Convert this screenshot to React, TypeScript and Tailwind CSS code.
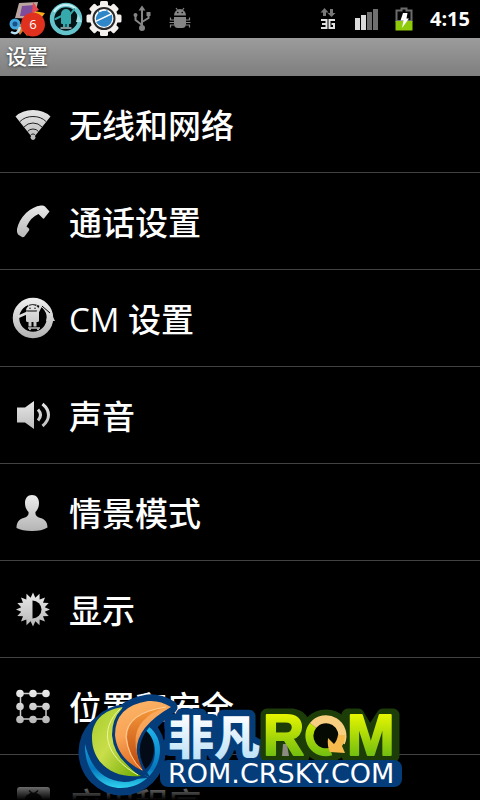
import type { ReactNode } from 'react';

const FONT = "font-['Open_Sans','Noto_Sans_CJK_SC',sans-serif]";

// Shared grey gradient for the preference icons
function IconDefs() {
  return (
    <svg width="0" height="0" className="absolute" aria-hidden>
      <defs>
        <linearGradient id="silver" gradientUnits="userSpaceOnUse" x1="0" y1="4" x2="0" y2="40">
          <stop offset="0" stopColor="#ececec" />
          <stop offset="1" stopColor="#b4b4b4" />
        </linearGradient>
      </defs>
    </svg>
  );
}

function RowIcon({ children }: { children: ReactNode }) {
  return (
    <svg viewBox="0 0 42 42" className="h-[42px] w-[42px] shrink-0 overflow-visible" fill="url(#silver)" aria-hidden>
      {children}
    </svg>
  );
}

function StatusIcon({ children }: { children: ReactNode }) {
  return (
    <svg viewBox="0 0 38 38" className="h-[38px] w-[38px] shrink-0" aria-hidden>
      {children}
    </svg>
  );
}

const WifiIcon = () => (
  <RowIcon>
    <path d="M3.500 13.500Q10 7 21 7t17.500 6.500L23 33a2.500 2.500 0 1 1-4 0Z" />
    <g fill="none" stroke="#222" strokeWidth="1">
      <path d="M8 18.500Q13 13.500 21 13.500t13 5" />
      <path d="M12 24Q15.500 20 21 20t9 4" />
      <path d="M15.500 28.500Q17.500 26 21 26t5.500 2.500" />
      <path d="M18.500 32.500a2.800 2.800 0 0 1 5 0" />
    </g>
  </RowIcon>
);

const PhoneIcon = () => (
  <RowIcon>
    <path d="M29 5.500Q31.500 5 33 6.500L37.500 11.500 32 18.500Q31 19 30 17.500L26.500 14Q19 17 14.500 26.500L17 28.500Q17.500 29.500 17 30.500L12.500 36.500Q11.500 37.500 10 37L6 34.500Q4.500 32.500 5 29 7 20 14 13 21 6.500 29 5.500Z" />
  </RowIcon>
);

const CmIcon = () => (
  <RowIcon>
    <circle cx="21" cy="21" r="17" fill="none" stroke="url(#silver)" strokeWidth="6.500" />
    <path d="M37 12l6 12h-9Z" />
    <path d="M30 9l8 7" stroke="#000" strokeWidth="1" />
    <path d="M14 13.500a6.500 5.500 0 0 1 13 0Z" />
    <path d="M15.500 7l2 2.500M26 7l-2 2.500" stroke="#ddd" strokeWidth="1" />
    <circle cx="18" cy="11.300" r=".7" fill="#000" />
    <circle cx="23" cy="11.300" r=".7" fill="#000" />
    <path d="M14 14.500h13v9q0 1.500-1.500 1.500h-1v4.500h-3V25h-2v4.500h-3V25h-1q-1.500 0-1.500-1.500Z" />
    <path d="M15 16l-8 3.500M26 14.500l3-6" stroke="#ddd" strokeWidth="2.500" strokeLinecap="round" />
    <path d="M16 31h12" stroke="#ddd" strokeWidth="1.300" />
    <circle cx="18" cy="32.300" r="1" />
    <circle cx="26" cy="32.300" r="1" />
  </RowIcon>
);

const SoundIcon = () => (
  <RowIcon>
    <path d="M5 13.500h8L22 7v28L13 28.500H5Z" />
    <g fill="none" stroke="url(#silver)" strokeWidth="3">
      <path d="M26 15.500q5 5.500 0 11" />
      <path d="M30.500 10Q36.500 15 36.500 21T30.500 32" />
    </g>
  </RowIcon>
);

const ProfileIcon = () => (
  <RowIcon>
    <path d="M20 4c4.500 0 7 3.500 7 8 0 4-1.500 7-3.500 9-.5 3 1 5 5 6 4.500 1 7 4.500 7 9.500Q30 40 20 40T4.500 37c0-5.500 2.500-9 7-10 4-1 5.500-3 5-6-2-2-3.500-5-3.500-9 0-4.500 2.500-8 7-8Z" />
  </RowIcon>
);

const RAYS = Array.from({ length: 32 }, (_, i) => {
  const r = i % 2 === 0 ? 17 : 12;
  const a = (i * Math.PI) / 16 - Math.PI / 2;
  return `${21 + r * Math.cos(a)},${21.500 + r * Math.sin(a)}`;
}).join(' ');

const DisplayIcon = () => (
  <RowIcon>
    <polygon points={RAYS} />
    <path d="M20.500 12.500a9 9 0 0 1 0 18Z" fill="#000" />
  </RowIcon>
);

const PatternIcon = () => (
  <RowIcon>
    <path d="M34 8.500H8.500V34H34V21.500H21" fill="none" stroke="#c8c8c8" strokeWidth="1.500" />
    {[[8, 8], [21, 8], [34, 8], [8, 21], [21, 21], [34, 21], [8, 34], [21, 34], [34, 34]].map(([x, y]) => (
      <circle key={`${x}-${y}`} cx={x} cy={y + 0.5} r="3.800" />
    ))}
  </RowIcon>
);

const AppsIcon = () => (
  <RowIcon>
    <rect x="5" y="5" width="33" height="33" rx="3" />
    <path d="M12 20a9.500 9.500 0 0 1 19 0Z" fill="#222" />
    <path d="M17 8.500l4.500 4 4.500-4" fill="none" stroke="#222" strokeWidth="1.500" />
  </RowIcon>
);

const ITEMS = [
  { label: '无线和网络', Icon: WifiIcon },
  { label: '通话设置', Icon: PhoneIcon },
  { label: 'CM 设置', Icon: CmIcon },
  { label: '声音', Icon: SoundIcon },
  { label: '情景模式', Icon: ProfileIcon },
  { label: '显示', Icon: DisplayIcon },
  { label: '位置和安全', Icon: PatternIcon },
  { label: '应用程序', Icon: AppsIcon },
];

function GearIcon() {
  return (
    <StatusIcon>
      {[0, 45, 90, 135].map(a => (
        <rect key={a} x="15" y="1" width="8" height="35" rx="1.500" fill="#f4f0ee" transform={`rotate(${a} 19 18.500)`} />
      ))}
      <circle cx="19" cy="18.500" r="14" fill="#f6f2f0" />
      <circle cx="19" cy="18.500" r="10.500" fill="#fff" stroke="#2b2b2b" strokeWidth="2" />
      <path d="M11 20.500a8.500 8.500 0 0 1 14.500-7Z" fill="#2f87c8" />
      <path d="M11 22l16-7.500c1 6-1 10.500-5.500 12-4 1-8-.5-10.500-4.500Z" fill="#2f87c8" />
      <path d="M13 11l2 3M22 10l-.5 3" stroke="#2f87c8" strokeWidth="1.200" />
    </StatusIcon>
  );
}

function StatusBar() {
  return (
    <header className="flex h-[38px] shrink-0 items-center bg-black pl-[9px] pr-2.5">
      <StatusIcon>
        <path d="M10 3l19-1-4 17-19-1Z" fill="#b9a4a0" />
        <path d="M13 6l13-1-3 11-12 0Z" fill="#7d4c9b" />
        <path d="M25 11l11 2-6 8Z" fill="#f3b11d" />
        <path d="M24 2l6 8-7 3Z" fill="#e84550" />
        <path d="M7 29l4 6 3-4 4 5 4-4 4 4 5-3V24H9Z" fill="#d7792a" />
        <circle cx="6" cy="24" r="4" fill="#174f86" stroke="#3fa5dc" strokeWidth="3" />
        <path d="M2 32q7 4 9-5" fill="none" stroke="#b5e2f5" strokeWidth="2.500" />
        <circle cx="24" cy="24.500" r="12" fill="#e0301e" />
        <text x="24" y="29" textAnchor="middle" fontSize="13" fill="#fff">6</text>
      </StatusIcon>
      <StatusIcon>
        <circle cx="19" cy="19" r="14" fill="#031316" stroke="#65c3cb" strokeWidth="4.500" />
        <path d="M7 12a14 14 0 0 1 22-3" fill="none" stroke="#c8f0f2" strokeWidth="2" />
        <path d="M31 14l4 8h-6Z" fill="#9ddde2" />
        <path d="M14 14a5 5 0 0 1 10 0v9q0 1-1 1h-1v3h-2.500v-3h-1v3H16v-3h-1q-1 0-1-1Z" fill="#36a9ad" />
        <path d="M14.500 16l-6 3M23.500 14l4-5" stroke="#36a9ad" strokeWidth="2" strokeLinecap="round" />
        <path d="M13.500 28h11" stroke="#c9dede" strokeWidth="1.300" />
      </StatusIcon>
      <GearIcon />
      <StatusIcon>
        <g fill="none" stroke="#858585" strokeWidth="2">
          <path d="M19 9v19M19 25l-6.500-5v-4M19 22l6.500-4v-4" />
        </g>
        <path d="M19 5.500l3.500 5h-7Z" fill="#858585" />
        <circle cx="19" cy="28" r="3" fill="#858585" />
        <circle cx="12.500" cy="15" r="2" fill="#858585" />
        <path d="M23.500 12h4v4h-4Z" fill="#858585" />
      </StatusIcon>
      <StatusIcon>
        <g fill="#858585">
          <path d="M13 15.500a6 6.500 0 0 1 12 0Z" />
          <path d="M13 17h12v7q0 4-4 4h-4q-4 0-4-4Z" />
        </g>
        <path d="M15 8l1.500 2M23 8l-1.500 2M13 20H9.500v-2.500M13 22.500H8.500M13 25H9.500v2.500M25 20h3.500v-2.500M25 22.500h4.500M25 25h3.500v2.500" fill="none" stroke="#858585" strokeWidth="1.200" />
        <circle cx="16.800" cy="12.500" r=".8" fill="#000" />
        <circle cx="21.200" cy="12.500" r=".8" fill="#000" />
      </StatusIcon>

      <div className="ml-auto flex items-center">
        <StatusIcon>
          <path d="M15.500 8l4 4.500H17V16h-3v-3.500h-2.500ZM22.500 17l-4-4H21V9h3v4h2.500Z" fill="#777" />
          <g fill="none" stroke="#e2e2e2" strokeWidth="2">
            <path d="M12 20h5.500v8H12M13 24h4.500" />
            <path d="M26 20h-5.500v8H25v-4h-2.500" />
          </g>
        </StatusIcon>
        <StatusIcon>
          <path d="M8 18h5v12H8ZM14 15h5v15h-5Z" fill="#dcdcdc" />
          <path d="M20 12h5v18h-5ZM26 9h5v21h-5Z" fill="#6f6f6f" />
        </StatusIcon>
        <StatusIcon>
          <path d="M16.500 8.500h5v2h5V21h-15V10.500h5Z" fill="#050505" stroke="#6c6c6c" strokeWidth="2" />
          <path d="M10.500 21h17v9.500h-17Z" fill="#8fcb0a" />
          <path d="M18 13h4.500l-1 5.500h2.500L17 28l1.500-7.500h-3Z" fill="#fff" />
        </StatusIcon>
        <time className="ml-[7px] text-xl font-bold leading-[38px] text-white">4:15</time>
      </div>
    </header>
  );
}

function SiteBadge() {
  return (
    <svg viewBox="0 0 328 110" className="pointer-events-none absolute bottom-0 left-[76px] h-[110px] w-[328px]" role="img" aria-label="非凡ROM">
      <defs>
        <linearGradient id="green" x1="0" y1="0" x2="1" y2="1">
          <stop offset="0" stopColor="#a5cc2c" />
          <stop offset=".45" stopColor="#c9de4a" />
          <stop offset="1" stopColor="#6ba900" />
        </linearGradient>
        <linearGradient id="orange" x1="0" y1="0" x2=".3" y2="1">
          <stop offset="0" stopColor="#fbb768" />
          <stop offset=".5" stopColor="#f9a357" />
          <stop offset="1" stopColor="#e06a1c" />
        </linearGradient>
        <linearGradient id="amber" x1="0" y1="0" x2="0" y2="1">
          <stop offset="0" stopColor="#f79a3c" />
          <stop offset="1" stopColor="#b8430a" />
        </linearGradient>
        <linearGradient id="cyan" x1="0" y1="0" x2="0" y2="1">
          <stop offset="0" stopColor="#22b8ee" />
          <stop offset=".7" stopColor="#0578bd" />
          <stop offset="1" stopColor="#2fd2ee" />
        </linearGradient>
        <linearGradient id="ice" gradientUnits="userSpaceOnUse" x1="0" y1="24" x2="0" y2="68">
          <stop offset="0" stopColor="#fff" />
          <stop offset="1" stopColor="#bfe2f8" />
        </linearGradient>
        <linearGradient id="lime" gradientUnits="userSpaceOnUse" x1="0" y1="24" x2="0" y2="67">
          <stop offset="0" stopColor="#e6f500" />
          <stop offset="1" stopColor="#6fbd10" />
        </linearGradient>
      </defs>

      {/* navy backing */}
      <circle cx="46" cy="62" r="43.500" fill="#053c7a" />
      <path d="M95 17Q83 10 72 11 39 16 39 45q2 24 28 36Q50 50 95 17Z" fill="#053c7a" stroke="#053c7a" strokeWidth="13" strokeLinejoin="round" />

      {/* globe */}
      <ellipse cx="65" cy="59" rx="13" ry="21" fill="#020b16" />
      <path d="M69 34c10 6 15 15 15 26 0 20-17 38-39 38C24 98 8 80 9 54c6 24 17 36 39 38 18 0 31-13 31-31 0-10-5-18-13-24Z" fill="url(#cyan)" />
      <path d="M46.500 17C27 20 16 31 16 48c0 24 20 41 49 38C43 74 34 48 46.500 17Z" fill="url(#green)" stroke="#053c7a" strokeWidth="5" paintOrder="stroke" />
      <path d="M44 19C23 39 28 66 62 85" fill="none" stroke="#edf6a0" strokeWidth="1" />
      <path d="M95 17Q84 10 72 11 39 16 39 45q2 24 28 36Q46 45 95 17Z" fill="url(#orange)" stroke="#053c7a" strokeWidth="6" paintOrder="stroke" />
      <path d="M92 17Q51 23 51 47q2 20 16 34-15-34 0-50Q76 21 92 17Z" fill="url(#amber)" />
      <path d="M90 17Q50 23 50 47 52 67 66 80" fill="none" stroke="#ffd09a" strokeWidth="1" />

      {/* lettering */}
      <text x="92" y="64" fontSize="46" fontWeight="900" fontFamily="'Noto Sans CJK SC', sans-serif" fill="url(#ice)" stroke="#053c7a" strokeWidth="13" strokeLinejoin="round" paintOrder="stroke" className="[font-style:oblique_8deg]">非凡</text>
      <g fill="#1d3d08" stroke="#1d3d08" strokeWidth="13" strokeLinejoin="round">
        <path d="M191 25h26q10 2 10 12 0 8-5 11l5 18h-36ZM272 25h10l12 20 13-20h10v41h-45Z" />
        <circle cx="250" cy="46" r="20" />
      </g>
      <path d="M207 54h4l2 12h-7Z" fill="#8b8b80" />
      <g fontSize="57" fontWeight="700" fontFamily="'Liberation Sans', sans-serif" fill="url(#lime)" stroke="url(#lime)" strokeWidth="2" strokeLinejoin="round">
        <text x="187" y="65">R</text>
        <text x="271" y="65">M</text>
      </g>
      <circle cx="250" cy="45.500" r="13" fill="#050a02" />
      <path d="M255 61.500a16.500 16.500 0 0 1-18-26" fill="none" stroke="url(#lime)" strokeWidth="8" />
      <path d="M237 35.500a16.500 16.500 0 0 1 28 17" fill="none" stroke="#f8cf80" strokeWidth="8" />
      <path d="M269 45q0 7-3 11l3 7-15-1q-3-6-2-14l6 6q3-3 4-9Z" fill="#f6bb4c" />

      <rect x="84" y="70" width="242" height="27" rx="8" fill="#053c7a" />
      <text x="92" y="93" fontSize="27" fontFamily="'DejaVu Sans', sans-serif" fill="#fff">ROM.CRSKY.COM</text>
    </svg>
  );
}

export default function App() {
  return (
    <div className={`relative flex h-screen flex-col overflow-hidden bg-black text-white ${FONT}`}>
      <IconDefs />
      <StatusBar />
      <h1 className="h-[38px] shrink-0 bg-linear-to-b from-[#9c9c9c] to-[#7e7e7e] pl-1.5 text-[21px] font-medium leading-[36px] [text-shadow:0_1px_3px_#333]">
        设置
      </h1>

      <main className="relative min-h-0 flex-1 overflow-hidden">
        <ul>
          {ITEMS.map(({ label, Icon }) => (
            <li key={label} className="border-b border-[#424242]">
              <button type="button" className="flex h-24 w-full items-center gap-[15px] px-3 text-left text-[33px] font-medium leading-[42px]">
                <Icon />
                <span className="pt-[3px]">{label}</span>
              </button>
            </li>
          ))}
        </ul>
        {/* fading edge of the scrolling list */}
        <div className="pointer-events-none absolute inset-x-0 bottom-0 h-7 bg-linear-to-b from-transparent to-black" />
      </main>

      <SiteBadge />
    </div>
  );
}
